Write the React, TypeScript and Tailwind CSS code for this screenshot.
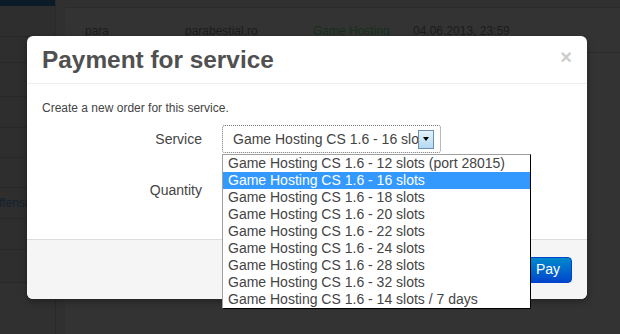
const options = [
  "Game Hosting CS 1.6 - 12 slots (port 28015)",
  "Game Hosting CS 1.6 - 16 slots",
  "Game Hosting CS 1.6 - 18 slots",
  "Game Hosting CS 1.6 - 20 slots",
  "Game Hosting CS 1.6 - 22 slots",
  "Game Hosting CS 1.6 - 24 slots",
  "Game Hosting CS 1.6 - 28 slots",
  "Game Hosting CS 1.6 - 32 slots",
  "Game Hosting CS 1.6 - 14 slots / 7 days",
];

const sideRows = [31, 26, 34, 31, 30, 30, 31, 31, 33];

const Background = () => {
  return (
    <div className="flex h-full w-full bg-[#303030]">
      <div className="flex w-[56px] flex-col border-r border-[#2a2a2a] bg-[#2e2e2e]">
        <div className="h-[6px] bg-[#0b1b28]" />
        {sideRows.map((h, i) => (
          <div
            key={i}
            style={{ height: h }}
            className="flex items-center border-b border-[#282828] text-[12px] text-[#13222f]"
          >
            {i === 6 ? <span className="-ml-[1px]">ffensive</span> : null}
          </div>
        ))}
        <div className="flex-1 bg-[#303030]" />
      </div>
      <div className="flex flex-1 flex-col pl-[9px] pt-[7px]">
        <div className="flex-1 border-t border-[#2a2a2a] bg-[#333333]">
          <div className="flex h-[45px] items-center border-b border-[#2c2c2c] pt-[2px] text-[12px] text-[#1c1c1c]">
            <span className="ml-[20px] w-[100px]">para</span>
            <span className="w-[128px]">parabestial.ro</span>
            <span className="w-[100px] text-[#16301a]">Game Hosting</span>
            <span>04.06.2013, 23:59</span>
          </div>
        </div>
      </div>
    </div>
  );
};

export default function App() {
  return (
    <div
      className="relative h-[334px] w-[620px] overflow-hidden"
      style={{ fontFamily: '"Liberation Sans", Arial, sans-serif' }}
    >
      <Background />

      <div className="absolute left-[27px] top-[36px] flex h-[263px] w-[560px] flex-col rounded-[6px] bg-white shadow-[0_3px_7px_rgba(0,0,0,0.3)]">
        <div className="relative border-b border-[#eeeeee] px-[15px] pb-[8px] pt-[9px]">
          <h3 className="text-[24.4px] font-bold leading-[30px] text-[#505050]">
            Payment for service
          </h3>
          <span className="absolute right-[15px] top-[11px] text-[20px] font-bold leading-[20px] text-[#cccccc]">
            ×
          </span>
        </div>

        <div className="flex-1 px-[15px] pt-[15px]">
          <p className="mb-[8px] text-[12px] leading-[18px] text-[#444444]">
            Create a new order for this service.
          </p>
          <div className="flex">
            <label className="w-[160px] text-right text-[14px] leading-[28px] text-[#444444]">
              Service
            </label>
            <div className="relative ml-[20px]">
              <div className="flex h-[28px] w-[219px] items-center rounded-[3px] border border-dotted border-[#777777] bg-white">
                <span className="flex-1 overflow-hidden whitespace-nowrap pl-[10px] text-[14px] text-[#444444]">
                  Game Hosting CS 1.6 - 16 slots
                </span>
                <span className="mr-[6px] flex h-[19px] w-[16px] shrink-0 items-center justify-center border border-[#6d8fae] bg-gradient-to-b from-[#e3f2fc] to-[#b4d9f3]">
                  <span className="h-0 w-0 border-x-[3.5px] border-t-[4px] border-x-transparent border-t-black" />
                </span>
              </div>
              <div className="absolute left-0 top-[29px] z-10 w-[309px] border border-b-black border-l-[#a0a0a0] border-r-black border-t-[#a0a0a0] bg-white">
                {options.map((o, i) => (
                  <div
                    key={o}
                    className={
                      i === 1
                        ? "h-[17px] whitespace-nowrap bg-[#3399ff] pl-[5px] text-[14px] leading-[17px] text-white"
                        : "h-[17px] whitespace-nowrap pl-[5px] text-[14px] leading-[17px] text-[#444444]"
                    }
                  >
                    {o}
                  </div>
                ))}
              </div>
            </div>
          </div>
          <div className="mt-[23px] flex">
            <label className="w-[160px] text-right text-[14px] leading-[28px] text-[#444444]">
              Quantity
            </label>
            <div className="ml-[20px] h-[28px] w-[60px] rounded-[3px] border border-[#cccccc]" />
          </div>
        </div>

        <div className="flex h-[60px] items-center justify-end gap-[5px] rounded-b-[6px] border-t border-[#dddddd] bg-[#f5f5f5] pr-[15px]">
          <button className="flex h-[26px] items-center rounded-[4px] border border-[#0044cc] bg-gradient-to-b from-[#0088cc] to-[#0044cc] px-[11px] text-[14px] text-white">
            Pay
          </button>
        </div>
      </div>
    </div>
  );
}
